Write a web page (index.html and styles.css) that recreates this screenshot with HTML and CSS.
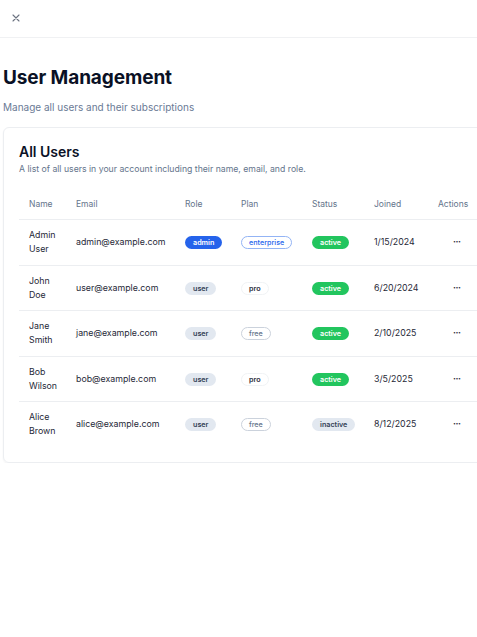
FILE: index.html
```html
<!DOCTYPE html>
<html>
<head>
<meta charset="utf-8">
<link rel="stylesheet" href="styles.css">
</head>
<body>
<header class="topbar">
  <button class="close" aria-label="Close">
    <svg width="8" height="8" viewBox="0 0 8 8"><path d="M1 1L7 7M7 1L1 7" stroke="#6b7280" stroke-width="1.1" stroke-linecap="round"/></svg>
  </button>
</header>
<main class="page">
  <h1 class="title">User Management</h1>
  <p class="subtitle">Manage all users and their subscriptions</p>
  <section class="card">
    <h2 class="card-title">All Users</h2>
    <p class="card-desc">A list of all users in your account including their name, email, and role.</p>
    <table class="users">
      <colgroup>
        <col class="c-name"><col class="c-email"><col class="c-role"><col class="c-plan"><col class="c-status"><col class="c-joined"><col class="c-actions">
      </colgroup>
      <thead>
        <tr><th>Name</th><th>Email</th><th>Role</th><th>Plan</th><th>Status</th><th>Joined</th><th>Actions</th></tr>
      </thead>
      <tbody>
        <tr>
          <td class="name">Admin<br>User</td>
          <td>admin@example.com</td>
          <td><span class="badge b-admin">admin</span></td>
          <td><span class="badge b-enterprise">enterprise</span></td>
          <td><span class="badge b-active">active</span></td>
          <td>1/15/2024</td>
          <td class="act">···</td>
        </tr>
        <tr>
          <td class="name">John<br>Doe</td>
          <td>user@example.com</td>
          <td><span class="badge b-user">user</span></td>
          <td><span class="badge b-pro">pro</span></td>
          <td><span class="badge b-active">active</span></td>
          <td>6/20/2024</td>
          <td class="act">···</td>
        </tr>
        <tr>
          <td class="name">Jane<br>Smith</td>
          <td>jane@example.com</td>
          <td><span class="badge b-user">user</span></td>
          <td><span class="badge b-free">free</span></td>
          <td><span class="badge b-active">active</span></td>
          <td>2/10/2025</td>
          <td class="act">···</td>
        </tr>
        <tr>
          <td class="name">Bob<br>Wilson</td>
          <td>bob@example.com</td>
          <td><span class="badge b-user">user</span></td>
          <td><span class="badge b-pro">pro</span></td>
          <td><span class="badge b-active">active</span></td>
          <td>3/5/2025</td>
          <td class="act">···</td>
        </tr>
        <tr>
          <td class="name">Alice<br>Brown</td>
          <td>alice@example.com</td>
          <td><span class="badge b-user">user</span></td>
          <td><span class="badge b-free">free</span></td>
          <td><span class="badge b-inactive">inactive</span></td>
          <td>8/12/2025</td>
          <td class="act">···</td>
        </tr>
      </tbody>
    </table>
  </section>
</main>
</body>
</html>
```
FILE: styles.css
```css
html, body {
  margin: 0;
  padding: 0;
  background: #ffffff;
  overflow: hidden;
}
body {
  font-family: Inter, "Noto Sans", sans-serif;
  color: #111827;
  width: 477px;
}
.topbar {
  height: 37px;
  border-bottom: 1px solid #f0f1f3;
  display: flex;
  align-items: center;
  padding-left: 11px;
}
.close {
  background: none;
  border: 0;
  padding: 0;
  width: 10px;
  height: 10px;
  display: flex;
  align-items: center;
  justify-content: center;
  margin-top: -2px;
}
.page {
  padding: 26px 0 0 3px;
}
.title {
  margin: 0;
  font-size: 19px;
  line-height: 28px;
  font-weight: 700;
  color: #0a1125;
  letter-spacing: -0.1px;
}
.subtitle {
  margin: 7px 0 0;
  font-size: 10px;
  line-height: 16px;
  color: #6a7a95;
}
.card {
  margin-top: 12px;
  width: 500px;
  border: 1px solid #eceef1;
  border-radius: 6px;
  box-shadow: 0 1px 2px rgba(0,0,0,0.05);
  padding: 14px 0 15px 15px;
  box-sizing: border-box;
}
.card-title {
  margin: 0;
  font-size: 14px;
  line-height: 20px;
  font-weight: 600;
  color: #0b1227;
}
.card-desc {
  margin: 1px 0 0;
  font-size: 8.7px;
  line-height: 12px;
  color: #64748b;
}
.users {
  margin-top: 12px;
  border-collapse: collapse;
  table-layout: fixed;
  width: 480px;
  font-size: 8.8px;
}
.c-name { width: 47px; }
.c-email { width: 109px; }
.c-role { width: 56px; }
.c-plan { width: 71px; }
.c-status { width: 62px; }
.c-joined { width: 64px; }
.c-actions { width: 71px; }
th {
  text-align: left;
  font-weight: 400;
  color: #64748b;
  font-size: 8.5px;
  height: 31px;
  padding: 1px 10px 0;
  border-bottom: 1px solid #eceef1;
}
td {
  padding: 0 10px;
  height: 44.5px;
  border-bottom: 1px solid #eceef1;
  color: #1f2937;
  line-height: 14px;
  white-space: nowrap;
}
tbody tr:last-child td {
  border-bottom: 0;
}
.act {
  padding-left: 25px;
  font-weight: 700;
  letter-spacing: -0.5px;
}
.badge {
  display: inline-block;
  font-size: 7.2px;
  font-weight: 600;
  line-height: 9px;
  padding: 1px 7px;
  border-radius: 999px;
  border: 1px solid transparent;
}
.b-admin { background: #2563eb; color: #ffffff; }
.b-user { background: #e2e8f0; color: #334155; }
.b-enterprise { background: #ffffff; border-color: #93b4f5; color: #2563eb; font-weight: 500; }
.b-pro { background: #ffffff; border-color: #f1f3f5; color: #1f2937; }
.b-free { background: #ffffff; border-color: #cbd2dc; color: #64748b; font-weight: 500; }
.b-active { background: #22c55e; color: #ffffff; }
.b-inactive { background: #e2e8f0; color: #334155; }
```
